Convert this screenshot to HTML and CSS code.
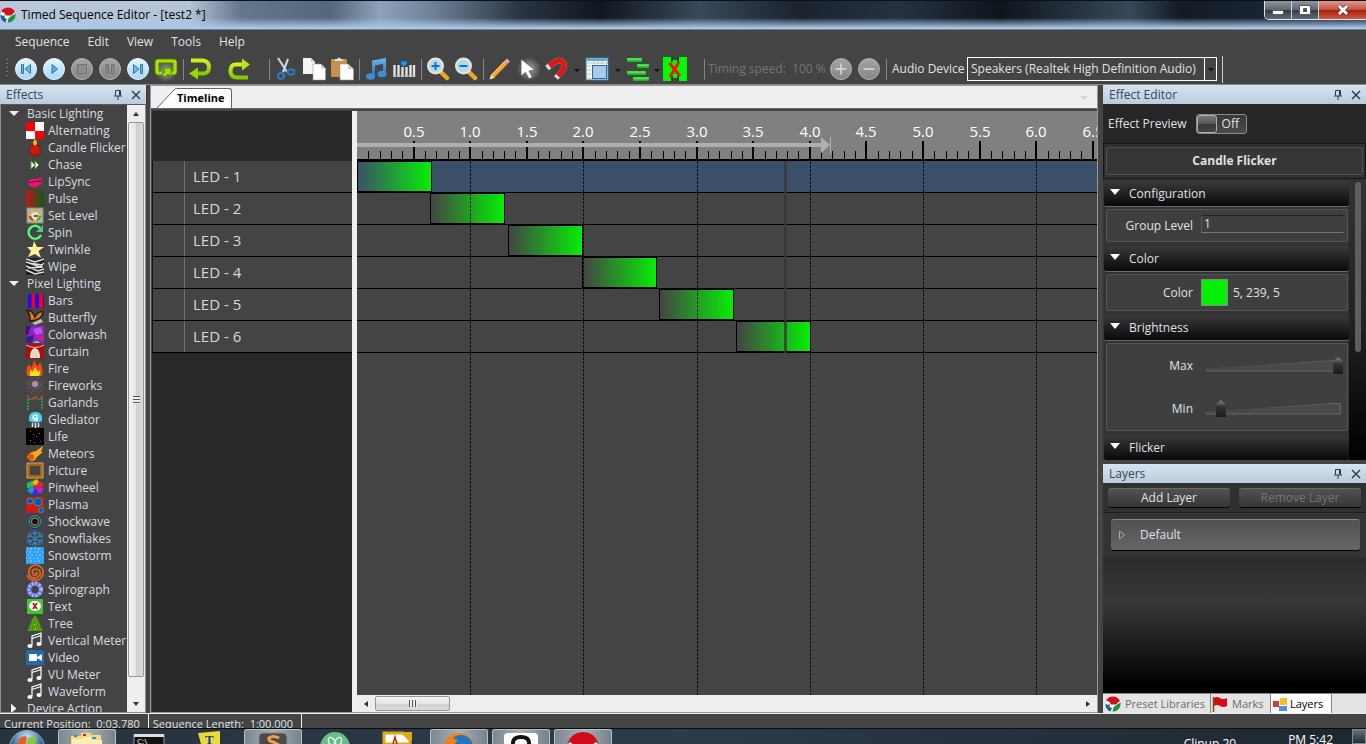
FILE: index.html
```html
<!DOCTYPE html>
<html lang="en">
<head>
  <title>Timed Sequence Editor - [test2 *]</title>
  <meta charset="utf-8">
  <meta name="viewport" content="width=device-width, initial-scale=1">
  <link rel="stylesheet" href="styles.css">
</head>
<body>

  <!-- shared shapes -->
  <svg class="defs" aria-hidden="true">
    <defs>
      <linearGradient id="blueDisc" x2="0" y2="1"><stop offset="0" stop-color="#e4f4ff"/><stop offset="1" stop-color="#a5d6fb"/></linearGradient>
      <linearGradient id="greyDisc" x2="0" y2="1"><stop offset="0" stop-color="#a6a6a6"/><stop offset="1" stop-color="#868686"/></linearGradient>
      <linearGradient id="lime" x2="0" y2="1"><stop offset="0" stop-color="#cdf01c"/><stop offset="1" stop-color="#84c800"/></linearGradient>
      <linearGradient id="note" x2="0" y2="1"><stop offset="0" stop-color="#6db4ea"/><stop offset="1" stop-color="#1f70b8"/></linearGradient>
      <radialGradient id="glow"><stop offset="0" stop-color="#aaa"/><stop offset="1" stop-color="#444"/></radialGradient>
      <linearGradient id="pulse"><stop offset="0" stop-color="#c01818"/><stop offset="1" stop-color="#0b5c18"/></linearGradient>
      <radialGradient id="orb" cy=".2"><stop offset="0" stop-color="#cfe6f5"/><stop offset="1" stop-color="#1c5d92"/></radialGradient>
      <symbol id="pin" viewBox="0 0 10 12"><path d="M2.500 1.500H7.500V6.500M2.500 1.500V6.500M6.500 1.500V6.500M1 7H9M5 7V11" fill="none" stroke="#2b3a48"/></symbol>
      <symbol id="close" viewBox="0 0 10 10"><path d="M1 1L9 9M9 1L1 9" fill="none" stroke="#2b3a48" stroke-width="1.400"/></symbol>
      <symbol id="notes" viewBox="0 0 18 17"><path d="M6 13V4L15 1V11M6 6.500L15 3.500" fill="none" stroke="#fff" stroke-width="1.200"/><ellipse cx="4" cy="14" rx="2.600" ry="2"/><ellipse cx="13" cy="12" rx="2.600" ry="2"/></symbol>
      <symbol id="logo" viewBox="0 0 16 16"><circle cx="8" cy="8" r="7.500" fill="#fff"/><path d="M1 4.500A8 8 0 0 1 15 5L11 8.500H6L4 5.500Z" fill="#d3101c"/><path d="M15.500 6.500A8 8 0 0 1 7.500 15.800L8.500 11L12 8.500Z" fill="#1d9440"/><path d="M.5 7.500L3 9L5 8L4.500 11L7 12L5.500 15.500A8 8 0 0 1 .5 7.500Z" fill="#1c5f9d"/></symbol>
    </defs>
  </svg>

  <header class="titlebar">
    <svg class="logo"><use href="#logo"/></svg>
    <h1>Timed Sequence Editor - [test2 *]</h1>
    <div class="winbtns">
      <button class="min" aria-label="Minimize"><svg width="14" height="12"><rect x="1.500" y="6.500" width="11" height="4" fill="#fff" stroke="#555a66"/></svg></button>
      <button class="max" aria-label="Maximize"><svg width="14" height="12"><path d="M1.500 1.500H12.500V10.500H1.500ZM5.500 4.500V7.500H8.500V4.500Z" fill="#fff" fill-rule="evenodd" stroke="#555a66"/></svg></button>
      <button class="quit" aria-label="Close"><svg width="14" height="12"><path d="M3 2L11 10M11 2L3 10" stroke="#54404a" stroke-width="4.500"/><path d="M3 2L11 10M11 2L3 10" stroke="#fff" stroke-width="2.800"/></svg></button>
    </div>
  </header>

  <nav class="menubar">
    <button>Sequence</button><button>Edit</button><button>View</button><button>Tools</button><button>Help</button>
  </nav>

  <div class="toolbar">
    <span class="grip"></span>
    <button aria-label="Go to start"><svg viewBox="0 0 24 24"><circle cx="12" cy="12" r="10.500" fill="url(#blueDisc)" stroke="#eaf6ff"/><path d="M7.500 7.500H9.500V16.500H7.500ZM16.500 7.500V16.500L11 12Z" fill="#6db7e4" stroke="#2e78ac"/></svg></button>
    <button aria-label="Play"><svg viewBox="0 0 24 24"><circle cx="12" cy="12" r="10.500" fill="url(#blueDisc)" stroke="#eaf6ff"/><path d="M10 7.500V16.500L15.500 12Z" fill="#5cabdc" stroke="#2e78ac"/></svg></button>
    <button aria-label="Stop" disabled><svg viewBox="0 0 24 24"><circle cx="12" cy="12" r="10.500" fill="url(#greyDisc)" stroke="#b0b0b0"/><path d="M7.500 7.500H16.500V16.500H7.500Z" fill="#8c8c8c" stroke="#707070"/></svg></button>
    <button aria-label="Pause" disabled><svg viewBox="0 0 24 24"><circle cx="12" cy="12" r="10.500" fill="url(#greyDisc)" stroke="#b0b0b0"/><path d="M8 7.500H10.500V16.500H8ZM13.500 7.500H16V16.500H13.500Z" fill="#8c8c8c" stroke="#707070"/></svg></button>
    <button aria-label="Go to end"><svg viewBox="0 0 24 24"><circle cx="12" cy="12" r="10.500" fill="url(#blueDisc)" stroke="#eaf6ff"/><path d="M14.500 7.500H16.500V16.500H14.500ZM7.500 7.500V16.500L13 12Z" fill="#6db7e4" stroke="#2e78ac"/></svg></button>
    <button aria-label="Loop"><svg viewBox="0 0 24 24"><circle cx="12" cy="14" r="11" fill="url(#glow)"/><path d="M8 16H4.500Q3 16 3 14.500V5.500Q3 4 4.500 4H19.500Q21 4 21 5.500V14.500Q21 16 19.500 16H17" fill="none" stroke="#568600" stroke-width="4.500"/><path d="M8 16H4.500Q3 16 3 14.500V5.500Q3 4 4.500 4H19.500Q21 4 21 5.500V14.500Q21 16 19.500 16H17" fill="none" stroke="#a6e000" stroke-width="3.200"/><path d="M9 11H17V20L14 17L11 20L8 18L11 15Z" fill="#a6e000" stroke="#568600"/></svg></button>
    <span class="sep"></span>
    <button class="wide" aria-label="Undo"><svg viewBox="0 0 24 24"><path d="M3 3.500H15Q21 4.500 21 10Q21 16.500 15 16.500H8" fill="none" stroke="url(#lime)" stroke-width="4"/><path d="M1 16.500L10 10.500V22.500Z" fill="#98d800"/></svg></button>
    <button class="wide" aria-label="Redo"><svg viewBox="0 0 24 24"><path d="M20 20.500H8Q2.500 19.500 2.500 14Q2.500 7.500 8 7.500H15" fill="none" stroke="url(#lime)" stroke-width="4"/><path d="M22 7.500L14 1.500V13.500Z" fill="#b4e610"/></svg></button>
    <span class="sep"></span>
    <button aria-label="Cut"><svg viewBox="0 0 24 24"><path d="M4 1L13 15M14 2L9 15" stroke="#c9d2d8" stroke-width="2.200"/><circle cx="7" cy="19" r="3" fill="none" stroke="#2d78bd" stroke-width="2.200"/><ellipse cx="17" cy="15" rx="3.500" ry="2.600" fill="none" stroke="#2d78bd" stroke-width="2.200"/></svg></button>
    <button aria-label="Copy"><svg viewBox="0 0 24 24"><path d="M1 1H9L13 5V17H1Z" fill="#f4f4f4"/><path d="M9 1V5H13" fill="#ccc"/><path d="M11 7H19L23.500 11.500V23H11Z" fill="#fff" stroke="#999" stroke-width=".6"/><path d="M19 7V11.500H23.500Z" fill="#ccc"/></svg></button>
    <button aria-label="Paste"><svg viewBox="0 0 24 24"><rect x="1" y="2" width="16" height="18" rx="1" fill="#c98f4c"/><path d="M5 4H13V2H11Q9 -1 7 2H5Z" fill="#dbe0e4"/><path d="M10 7H18L23.500 12V23H10Z" fill="#fff" stroke="#999" stroke-width=".6"/><path d="M18 7V12H23.500Z" fill="#ccc"/></svg></button>
    <span class="sep"></span>
    <button aria-label="Audio"><svg viewBox="0 0 24 24"><path d="M8 3.500L22 1V17H19V7L11 8.500V20H8Z" fill="url(#note)"/><ellipse cx="6.500" cy="19.500" rx="4.500" ry="3.200" fill="#3c8fd4"/><ellipse cx="18" cy="17" rx="4.500" ry="3.200" fill="#3c8fd4"/></svg></button>
    <button aria-label="Beat marks"><svg viewBox="0 0 24 24"><path d="M2.500 8V20M6.500 8V20M10.500 10V20M14.500 10V20M18.500 8V20M22 8V20" stroke="#e2e2e2" stroke-width="2.400"/><path d="M1 19H23" stroke="#bbb"/><path d="M9 4H15V7L12 10L9 7Z" fill="#2a90e0" stroke="#0b5fa4"/></svg></button>
    <span class="sep"></span>
    <button aria-label="Zoom in"><svg viewBox="0 0 24 24"><path d="M14 14L21 21" stroke="#f0a428" stroke-width="4.500" stroke-linecap="round"/><circle cx="9.500" cy="9" r="7.500" fill="#a9dcff" stroke="#f0e4c6" stroke-width="2"/><path d="M5.500 9H13.500M9.500 5V13" stroke="#1f6fb4" stroke-width="2"/></svg></button>
    <button aria-label="Zoom out"><svg viewBox="0 0 24 24"><path d="M14 14L21 21" stroke="#f0a428" stroke-width="4.500" stroke-linecap="round"/><circle cx="9.500" cy="9" r="7.500" fill="#a9dcff" stroke="#f0e4c6" stroke-width="2"/><path d="M5.500 9H13.500" stroke="#1f6fb4" stroke-width="2"/></svg></button>
    <span class="sep"></span>
    <button aria-label="Draw"><svg viewBox="0 0 24 24"><path d="M4 20L18 5.500" stroke="#f6a62c" stroke-width="4"/><path d="M3.500 18L17 4" stroke="#ffd489"/><path d="M18 5.500L20.500 3" stroke="#e9a0c0" stroke-width="4"/><path d="M1.500 22.500L3 17.500L6.500 21Z" fill="#f3dcb4"/></svg></button>
    <button aria-label="Select"><svg viewBox="0 0 24 24"><circle cx="13" cy="12" r="12" fill="url(#glow)"/><path d="M5 2V19L9.500 15.500L13 22L16.500 20L13 14L19 13Z" fill="#fff" stroke="#555" stroke-width=".8"/></svg></button>
    <button aria-label="Snap"><svg viewBox="0 0 24 24"><path d="M3 11L10 5.500Q15.500 1.500 19 5.500Q22 9.500 17.500 15L12 21" fill="none" stroke="#ddd" stroke-width="5.500"/><path d="M5.500 9L10 5.500Q15.500 1.500 19 5.500Q22 9.500 17.500 15L14 18.800" fill="none" stroke="#dc1616" stroke-width="5.500"/></svg></button>
    <span class="caret"></span>
    <button aria-label="Grid"><svg viewBox="0 0 24 24"><rect x="1" y="1" width="22" height="22" fill="#f2f7fb" stroke="#2d7ab4"/><path d="M1.500 1.500H22.500V4H1.500Z" fill="#58a8de"/><path d="M2 6H22M2 9H6M2 13H6M2 17H6M2 21H6M9 4V7M13 4V7M17 4V7" stroke="#d8c488"/><rect x="7.500" y="8.500" width="14" height="13" fill="#aac8e8" stroke="#2d68aa"/></svg></button>
    <span class="caret"></span>
    <button aria-label="Align"><svg viewBox="0 0 24 24"><path d="M1 1H16V5H1ZM11 7H23V11H11ZM1 14H20V18H1ZM7 20H23V24H7Z" fill="#2cc82c" stroke="#0c7c14" stroke-width=".6"/><path d="M1 2H16M11 8H23M1 15H20M7 21H23" stroke="#8cf08c"/></svg></button>
    <span class="caret close-up"></span>
    <button class="wide" aria-label="Close gaps"><svg viewBox="0 0 24 24"><path d="M0 0H24V24H0Z" fill="#00fb00"/><path d="M9 0V5M9 19V24M15 0V5M15 19V24" stroke="#111" stroke-width="1.500"/><path d="M10 0H14V3H10ZM10 21H14V24H10Z" fill="#444"/><path d="M6.500 6L17 19M16 5L7 20" stroke="#f01800" stroke-width="3"/></svg></button>
    <span class="sep"></span>
    <span class="speed">Timing speed:&nbsp; 100 %</span>
    <button aria-label="Faster" disabled><svg viewBox="0 0 24 24"><circle cx="12" cy="12" r="10.500" fill="url(#greyDisc)" stroke="#b0b0b0"/><path d="M6.500 12H17.500M12 6.500V17.500" stroke="#ccc" stroke-width="2"/></svg></button>
    <button aria-label="Slower" disabled><svg viewBox="0 0 24 24"><circle cx="12" cy="12" r="10.500" fill="url(#greyDisc)" stroke="#b0b0b0"/><path d="M6.500 12H17.500" stroke="#ccc" stroke-width="2"/></svg></button>
    <span class="sep"></span>
    <label for="audio">Audio Device</label>
    <div class="combo">
      <select id="audio"><option>Speakers (Realtek High Definition Audio)</option></select>
      <span class="combo-arrow"></span>
    </div>
    <span class="bar-end"></span>
  </div>

  <main>
    <aside class="effects">
      <div class="panel-head"><h2>Effects</h2><button aria-label="Pin"><svg class="pin"><use href="#pin"/></svg></button><button aria-label="Close"><svg class="close"><use href="#close"/></svg></button></div>
      <div class="tree-wrap">
        <ul class="tree">
          <li class="group open">Basic Lighting</li>
          <li><svg viewBox="0 0 18 17"><path d="M0 0H18V17H0Z" fill="#fff"/><path d="M0 0H9V9H0ZM9 9H18V17H9Z" fill="red"/></svg>Alternating</li>
          <li><svg viewBox="0 0 18 17"><path d="M4 7Q9 5 14 7V15Q9 18 4 15Z" fill="#d01808" stroke="#701008" stroke-width=".7"/><path d="M9 0Q13 4 9 7Q5 4 9 0Z" fill="#ffb020"/></svg>Candle Flicker</li>
          <li><svg viewBox="0 0 18 17"><path d="M5 5L9 9L5 13ZM9 5L13 9L9 13Z" fill="#fff" stroke="#4ba62a"/></svg>Chase</li>
          <li><svg viewBox="0 0 18 17"><path d="M1 10Q6 4 10 6Q15 4 17 7Q15 13 9 14Q4 14 1 10Z" fill="#f0146c"/><path d="M2 10Q9 8 16 8" stroke="#60082c" fill="none"/></svg>LipSync</li>
          <li><svg viewBox="0 0 18 17"><path d="M0 0H18V17H0Z" fill="url(#pulse)"/></svg>Pulse</li>
          <li><svg viewBox="0 0 18 17"><rect x="1" y="1" width="16" height="15" fill="#b4b4ac" stroke="#888"/><circle cx="9" cy="9" r="5" fill="#ddd" stroke="#d8b820" stroke-width="2"/><path d="M4 9A5 5 0 0 0 7 13" stroke="#d02020" stroke-width="2" fill="none"/><path d="M14 9A5 5 0 0 1 11 13" stroke="#40a030" stroke-width="2" fill="none"/><path d="M8 9H12" stroke="#333" stroke-width="1.500"/></svg>Set Level</li>
          <li><svg viewBox="0 0 18 17"><path d="M15 11A6.500 6.500 0 1 1 14 4" fill="none" stroke="#17863a" stroke-width="3.500"/><path d="M15 11A6.500 6.500 0 1 1 14 4" fill="none" stroke="#7cec9a" stroke-width="2"/><path d="M17 1V8H10Z" fill="#50d070"/></svg>Spin</li>
          <li><svg viewBox="0 0 18 17"><path d="M8 0L11 6L18 6L12.500 10L15 17L9 13L2 16L5 10L1 6L6.500 6Z" fill="#fff3a0"/></svg>Twinkle</li>
          <li><svg viewBox="0 0 18 17"><path d="M0 0H18V17H0Z" fill="#222"/><path d="M0 1L9 4L18 1M0 4L14 9L18 5M0 8L12 13L18 11M0 12L9 16L18 14M3 5L16 7M2 10L17 9" fill="none" stroke="#ddd" stroke-width="1.500"/></svg>Wipe</li>
          <li class="group open">Pixel Lighting</li>
          <li><svg viewBox="0 0 18 17"><path d="M2 2H18V16H2Z" fill="#1010ff"/><path d="M5.500 2H9V16H5.500ZM13 2H17V16H13Z" fill="red"/></svg>Bars</li>
          <li><svg viewBox="0 0 18 17"><path d="M1 1Q7 2 9 8Q12 2 17 3Q16 9 10 11L4 12Q5 7 1 1Z" fill="#d87828" stroke="#2b1a10" stroke-width="1.500"/><path d="M6 14L15 10L17 13L9 16Z" fill="#bbb"/></svg>Butterfly</li>
          <li><svg viewBox="0 0 18 17"><path d="M0 0H18V17H0Z" fill="#8c24c8"/><path d="M0 0H5L2 9H0Z" fill="#401078"/><path d="M7 3L15 1L17 7L10 9Z" fill="#c050e8"/><path d="M0 11L8 9L6 17H0Z" fill="#3c1c90"/><path d="M10 10L18 9V14L12 14Z" fill="#c82090"/><path d="M7 17Q11 13 14 17Z" fill="#70e070"/></svg>Colorwash</li>
          <li><svg viewBox="0 0 18 17"><path d="M0 1H18V16H0Z" fill="#a81010"/><path d="M4 15Q4 6 9 5Q14 6 14 15Z" fill="#f2e6d4"/><path d="M7 15V8M9 15V6M11 15V8" stroke="#c9b79c" stroke-width=".6"/><path d="M0 2Q9 7 18 2" stroke="#eebcb0" fill="none"/></svg>Curtain</li>
          <li><svg viewBox="0 0 18 17"><path d="M1 16Q-1 8 3 4Q4 8 6 7Q6 3 9 0Q9 5 12 6L14 2Q18 10 16 16Z" fill="#f04a10"/><path d="M4 16Q3 11 5 10L7 12L9 7L12 12L14 10Q15 13 13 16Z" fill="#ffe020"/></svg>Fire</li>
          <li><svg viewBox="0 0 18 17"><path d="M9 0V17M0 8H18M2 2L16 15M16 2L2 15M5 0L13 17M13 0L5 17M0 5L18 12M0 12L18 5" stroke="#7d6a78" stroke-width="1" stroke-dasharray="1 1"/><circle cx="9" cy="7" r="3" fill="#b48ca4"/></svg>Fireworks</li>
          <li><svg viewBox="0 0 18 17"><path d="M2 16V3Q5 7 9 3Q13 7 16 3V16" fill="none" stroke="#2f9848" stroke-width="2" stroke-dasharray="2 1"/><path d="M1 1H3V4H1ZM8 2H11V5H8ZM15 1H17V4H15Z" fill="#e02828"/></svg>Garlands</li>
          <li><svg viewBox="0 0 18 17"><path d="M3 10V6Q4 1 9.500 1Q15 1 16 6V10Q10 13 3 10Z" fill="#50cdec"/><path d="M12 5Q8 3 7 6Q7 9 11 9V7H9" fill="none" stroke="#fff" stroke-width="1.500"/><path d="M6.500 12V16M9.500 12V17M12.500 12V16" stroke="#ddd" stroke-width="1.500"/></svg>Glediator</li>
          <li><svg viewBox="0 0 18 17"><path d="M0 0H18V17H0Z" fill="#000"/><path d="M4 3H5V4H4ZM10 8H11V9H10Z" fill="#e02020"/><path d="M13 5H14V6H13ZM4 12H5V13H4Z" fill="#20c020"/><path d="M7 6H8V7H7ZM14 13H15V14H14ZM8 14H9V15H8Z" fill="#5050ff"/></svg>Life</li>
          <li><svg viewBox="0 0 18 17"><path d="M1 12Q3 7 10 6L17 1L15 7L17 7Q10 12 9 15Q4 18 1 12Z" fill="#ffa818"/><circle cx="5" cy="12" r="3.200" fill="#e05808"/></svg>Meteors</li>
          <li><svg viewBox="0 0 18 17"><path d="M2.500 2.500H15.500V14.500H2.500Z" fill="none" stroke="#a06818" stroke-width="3"/><path d="M1 1H17V16H1Z" fill="none" stroke="#d8a458"/></svg>Picture</li>
          <li><svg viewBox="0 0 18 17"><path d="M9 8L5 3L11 0L13 3Z" fill="#f0b010"/><path d="M9 8L14 2L18 6L15 9Z" fill="#f01848"/><path d="M9 8L17 9L16 14L12 14Z" fill="#c020d0"/><path d="M9 8L13 15L8 17L5 14Z" fill="#3030e0"/><path d="M9 8L6 15L1 12L3 9Z" fill="#1898e0"/><path d="M9 8L1 9L1 4L6 2Z" fill="#20c060"/><circle cx="9" cy="8" r="2" fill="#e02020"/></svg>Pinwheel</li>
          <li><svg viewBox="0 0 18 17"><path d="M0 1H18V17H0Z" fill="#d01818"/><circle cx="4" cy="5" r="3" fill="#2040e0" stroke="#20b040"/><circle cx="12" cy="6" r="4" fill="#2040e0" stroke="#20b040"/><circle cx="15" cy="14" r="2.500" fill="#2040e0" stroke="#20b040"/></svg>Plasma</li>
          <li><svg viewBox="0 0 18 17"><circle cx="9" cy="8.500" r="8" fill="#202050" stroke="#4040c0"/><circle cx="9" cy="8.500" r="6" fill="none" stroke="#30a030" stroke-width="1.500"/><circle cx="9" cy="8.500" r="3.600" fill="#111" stroke="#a07070" stroke-width="1.500"/></svg>Shockwave</li>
          <li><svg viewBox="0 0 18 17"><path d="M9 0V17M1 4L17 13M17 4L1 13M6 2L9 5L12 2M6 15L9 12L12 15M1 7L5 6.500L4 2M17 10L13 10.500L14 15M17 7L13 6.500L14 2M1 10L5 10.500L4 15" fill="none" stroke="#3880bc" stroke-width="1.300"/></svg>Snowflakes</li>
          <li><svg viewBox="0 0 18 17"><path d="M0 0H18V17H0Z" fill="#2ea0f8"/><path d="M1 2H17M0 5H18M2 8H16M0 11H18M1 14H17" stroke="#a0dcff" stroke-dasharray="1 2 2 3"/></svg>Snowstorm</li>
          <li><svg viewBox="0 0 18 17"><path d="M9 9Q11 8 11 10Q9 13 7 10Q5 5 10 5Q15 6 14 11Q10 16 5 13Q0 7 6 2Q13 -1 17 6Q18 13 12 16Q4 18 1 11" fill="none" stroke="#e8641c" stroke-width="1.700"/></svg>Spiral</li>
          <li><svg viewBox="0 0 18 17"><circle cx="9" cy="8.500" r="6" fill="none" stroke="#4888f0" stroke-width="4.500"/><circle cx="9" cy="8.500" r="6" fill="none" stroke="#f0a0e0" stroke-width="3.500" stroke-dasharray="1.500 2"/></svg>Spirograph</li>
          <li><svg viewBox="0 0 18 17"><rect x="1" y="1" width="16" height="15" fill="#40c830"/><ellipse cx="9" cy="8" rx="6" ry="5" fill="#fff"/><path d="M7 5L11 11M11 5L7 11" stroke="#c01818" stroke-width="1.800"/></svg>Text</li>
          <li><svg viewBox="0 0 18 17"><path d="M9 0L13 6L12 6L15 11L14 11L17 16H1L4 11L3 11L6 6L5 6Z" fill="#4ca010"/><path d="M8 5H9V6H8ZM11 9H12V10H11ZM6 12H7V13H6Z" fill="#f02020"/><path d="M9 13H10V14H9ZM8 9H9V10H8Z" fill="#ffe040"/></svg>Tree</li>
          <li><svg fill="#fff"><use href="#notes"/></svg>Vertical Meter</li>
          <li><svg viewBox="0 0 18 17"><rect x="0" y="1" width="18" height="15" rx="1" fill="#2468b0"/><path d="M3 5H11V12H3ZM11 8L16 5V12L11 9Z" fill="#fff"/></svg>Video</li>
          <li><svg fill="#fff"><use href="#notes"/></svg>VU Meter</li>
          <li><svg fill="#fff"><use href="#notes"/></svg>Waveform</li>
          <li class="group">Device Action</li>
        </ul>
        <div class="vscroll"><span class="up"></span><span class="thumb"></span><span class="down"></span></div>
      </div>
    </aside>

    <section class="document">
      <div class="tabstrip">
        <svg class="slant" viewBox="0 0 20 20"><path d="M0 20L16 3Q18 .5 20 .5V20Z" fill="#fff"/><path d="M0 20L16 3Q18 .5 20 .5" fill="none" stroke="#666"/></svg>
        <a href="#timeline">Timeline</a>
        <span class="tab-menu"></span>
      </div>
      <div class="timeline" id="timeline">
        <div class="rows">
          <div class="corner"></div>
          <div class="row-label">LED - 1</div>
          <div class="row-label">LED - 2</div>
          <div class="row-label">LED - 3</div>
          <div class="row-label">LED - 4</div>
          <div class="row-label">LED - 5</div>
          <div class="row-label">LED - 6</div>
        </div>
        <div class="splitter"></div>
        <div class="time">
          <svg class="ruler" id="ruler"></svg>
          <div class="grid" id="grid"></div>
          <div class="hscroll"><span class="left"></span><span class="thumb"></span><span class="right"></span></div>
        </div>
      </div>
    </section>

    <aside class="side">
      <section class="editor">
        <div class="panel-head"><h2>Effect Editor</h2><button aria-label="Pin"><svg class="pin"><use href="#pin"/></svg></button><button aria-label="Close"><svg class="close"><use href="#close"/></svg></button></div>
        <div class="preview"><span>Effect Preview</span><button class="toggle"><i></i>Off</button></div>
        <div class="effect-name"><h3>Candle Flicker</h3></div>
        <div class="props">
          <div class="cats">
            <button class="cat">Configuration</button>
            <div class="fields"><div class="field level"><label for="group">Group Level</label><input id="group" type="text" value="1"></div></div>
            <button class="cat">Color</button>
            <div class="fields"><div class="field color"><span class="name">Color</span><button class="swatch" aria-label="Pick color"></button>5, 239, 5</div></div>
            <button class="cat">Brightness</button>
            <div class="fields">
              <div class="field"><label for="max">Max</label><span class="wedge"><input id="max" type="range" value="98"></span></div>
              <div class="field"><label for="min">Min</label><span class="wedge"><input id="min" type="range" value="11"></span></div>
            </div>
            <button class="cat">Flicker</button>
          </div>
          <div class="thin-scroll"></div>
        </div>
      </section>
      <section class="layers">
        <div class="panel-head"><h2>Layers</h2><button aria-label="Pin"><svg class="pin"><use href="#pin"/></svg></button><button aria-label="Close"><svg class="close"><use href="#close"/></svg></button></div>
        <div class="layer-btns"><button>Add Layer</button><button disabled>Remove Layer</button></div>
        <div class="layer-list">
          <div class="layer"><svg width="8" height="10"><path d="M1.500 1L6.500 5L1.500 9Z" fill="none" stroke="#aaa"/></svg>Default</div>
        </div>
        <div class="dock-tabs">
          <button><svg><use href="#logo"/></svg>Preset Libraries</button>
          <button class="marks"><svg viewBox="0 0 16 16"><path d="M1.500 1V16" stroke="#7a4a20" stroke-width="1.500"/><path d="M2 2Q5 0 8 2T15 2V10Q11 12 8 10T2 10Z" fill="#d40c14"/></svg>Marks</button>
          <button class="active"><svg viewBox="0 0 16 16"><rect x="1" y="5" width="6" height="6" fill="#d83c34"/><rect x="8" y="2" width="7" height="7" fill="#f6c01c"/><rect x="7" y="10" width="8" height="5" fill="#4c8cf0"/></svg>Layers</button>
        </div>
      </section>
    </aside>
  </main>

  <footer class="status">
    <span>Current Position:&nbsp; 0:03.780</span><span>Sequence Length:&nbsp; 1:00.000</span>
  </footer>

  <div class="taskbar">
    <button class="start" aria-label="Start"><svg viewBox="0 0 36 15"><circle cx="18" cy="19" r="17.500" fill="url(#orb)" stroke="#9ab"/><path d="M10 10Q14 6 18 8L16 16H9Z" fill="#e85a20"/><path d="M19 8Q23 10 28 7L26 16H18Z" fill="#8cc63c"/></svg></button>
    <button class="lit" aria-label="Explorer"><svg viewBox="0 0 36 15"><path d="M2 15V6H12V3H22V5H32V15Z" fill="#f7d983"/><path d="M3 9H14V7H24V10H33V15H3Z" fill="#fdeeb8"/><path d="M5 5H8V7H5Z" fill="#20a040"/><path d="M14 4H17V6H14Z" fill="#d02020"/><path d="M23 7H27V9H23Z" fill="#3090e0"/></svg></button>
    <button aria-label="Command Prompt"><svg viewBox="0 0 36 15"><rect x="3" y="6" width="30" height="12" fill="#111" stroke="#999"/><rect x="3" y="5" width="30" height="3" fill="#ddd"/><text x="6" y="15" fill="#fff" font-size="8">C:\</text></svg></button>
    <button aria-label="Text tool"><svg viewBox="0 0 36 15"><path d="M5 4L27 2V15H8Z" fill="#e8dc3c"/><text x="12" y="15" fill="#1c3a8c" font-size="13" font-weight="bold" font-family="Liberation Serif">T</text></svg></button>
    <button class="lit" aria-label="Sublime Text"><svg viewBox="0 0 36 15"><rect x="4" y="3" width="28" height="20" rx="4" fill="#4b4b4b" stroke="#888"/><path d="M24 8Q18 5 14 8Q13 11 18 12L24 15" fill="none" stroke="#f0a050" stroke-width="3"/></svg></button>
    <button aria-label="Atom"><svg viewBox="0 0 36 15"><circle cx="18" cy="18" r="15" fill="#66bf8a"/><ellipse cx="15" cy="13" rx="3" ry="5" fill="none" stroke="#e4ffee" stroke-width="1.500" transform="rotate(-30 15 13)"/><ellipse cx="21" cy="13" rx="3" ry="5" fill="none" stroke="#e4ffee" stroke-width="1.500" transform="rotate(30 21 13)"/></svg></button>
    <button aria-label="Draw"><svg viewBox="0 0 36 15"><path d="M5 15V4H24L31 11V15Z" fill="#fff" stroke="#e0a814" stroke-width="3"/><path d="M14 15L16 8L18 15" fill="none" stroke="#a03020" stroke-width="1.500"/><path d="M23 3L33 12V3Z" fill="#e0a814"/></svg></button>
    <button class="lit" aria-label="Firefox"><svg viewBox="0 0 36 15"><circle cx="18" cy="18" r="15" fill="#f08018"/><circle cx="20" cy="17" r="12" fill="#2474c4"/><path d="M4 15Q5 7 11 5Q11 9 17 10L13 15Z" fill="#f08018"/></svg></button>
    <button class="lit" aria-label="GitHub"><svg viewBox="0 0 36 15"><rect x="1" y="3" width="34" height="20" rx="4" fill="#fff"/><path d="M10 15Q9 7 18 7Q27 7 26 15" fill="none" stroke="#111" stroke-width="4"/></svg></button>
    <button class="lit" aria-label="Vixen"><svg viewBox="0 0 36 15"><path d="M2 15Q6 2 18 2Q30 2 34 15Z" fill="#d00c1c"/><path d="M2 15L5 12L9 15ZM27 15L31 12L34 15Z" fill="#fff"/></svg></button>
    <span class="tray">Clipup 20</span>
    <span class="clock">PM 5:42</span>
    <span class="desk"></span>
  </div>

  <script>
    const SCALE = 113.2 // pixels per second
    const END = 4.18
    const CURSOR = 3.78
    const effects = [
      { start: 0, len: .66 },
      { start: .645, len: .66 },
      { start: 1.33, len: .66 },
      { start: 1.99, len: .66 },
      { start: 2.67, len: .66 },
      { start: 3.35, len: .66 },
    ]
    const x = t => Math.round(t * SCALE)

    const drawRuler = () => {
      const last = Math.ceil(ruler.clientWidth / SCALE * 10)
      let major = '', minor = '', text = ''
      for (let i = 1; i <= last; i++) {
        const px = x(i / 10)
        if (i % 5) minor += `M${px + .5} 40V48`
        else {
          major += `M${px} 30V48`
          text += `<text x="${px}" y="26">${(i / 10).toFixed(1)}</text>`
        }
      }
      const e = x(END)
      ruler.innerHTML = `
        <path class="minor" d="${minor}"/>
        <path class="major" d="${major}"/>
        <path class="range" d="M0 32H${e - 9}V26L${e} 34L${e - 9} 42V36H0ZM${e} 26H${e + 1}V43H${e}Z"/>
        <path class="major" d="M0 49H${ruler.clientWidth}"/>
        ${text}`
    }

    const drawGrid = () => {
      grid.innerHTML = effects.map((e, i) => `
        <div class="row${i ? '' : ' selected'}"><div class="effect" style="left: ${x(e.start)}px; width: ${x(e.len)}px"></div></div>`).join('')
      for (let t = 1; t * SCALE < grid.clientWidth; t++)
        grid.innerHTML += `<div class="second" style="left: ${x(t)}px"></div>`
      grid.innerHTML += `<div class="cursor" style="left: ${x(CURSOR) - 1}px"></div>`
    }

    const draw = () => { drawRuler(); drawGrid() }
    window.addEventListener('resize', draw)
    draw()
  </script>

</body>
</html>
```
FILE: styles.css
```css
*, *::before, *::after {
  box-sizing: border-box;
}
html, body {
  height: 100%;
  margin: 0;
}
body {
  display: flex;
  flex-direction: column;
  overflow: hidden;
  background: #444;
  color: #dfe3e6;
  font: 12px/16px "Open Sans", "Noto Sans", sans-serif;
}
button, input, select {
  font: inherit;
  color: inherit;
  border: 0;
  padding: 0;
  margin: 0;
  background: none;
}
h1, h2, h3, ul {
  margin: 0;
  padding: 0;
  font: inherit;
}
svg {
  display: block;
  flex-shrink: 0;
}
.defs {
  position: absolute;
  width: 0;
  height: 0;
}

/* title bar */
.titlebar {
  height: 30px;
  flex-shrink: 0;
  display: flex;
  align-items: center;
  gap: 5px;
  border-top: 1px solid #0c1018;
  border-bottom: 1px solid #6f8294;
  color: #000;
  background:
    linear-gradient(#0000 60%, #a9c8ea 97%),
    linear-gradient(90deg, #b9c8dc 0, #b4c3d6 190px, #66788f 240px, #54667c 330px, #8da2bb 380px, #6f8399 430px, #2a3442 520px, #10161f 600px, #39485a 700px, #1a232e 800px, #263240 900px, #0d141c 1000px, #38485a 1130px, #131b25 1180px, #223040);
}
.logo {
  width: 16px;
  height: 16px;
}
.winbtns {
  margin-left: auto;
  align-self: flex-start;
  display: flex;
  border: 1px solid #dde6ee;
  border-top: 0;
  border-right: 0;
  border-radius: 0 0 0 5px;
  overflow: hidden;
}
.winbtns button {
  width: 27px;
  height: 18px;
  display: flex;
  align-items: center;
  justify-content: center;
  border-right: 1px solid #cdd6de;
  background: linear-gradient(#8e969e, #5c646c 50%, #353d46 51%, #5f6b78);
}
.winbtns .quit {
  width: 47px;
  border: 0;
  background: linear-gradient(#dc9c90, #c4503c 50%, #a82010 51%, #cc5840);
}

/* menu and tools */
.menubar {
  height: 24px;
  flex-shrink: 0;
  display: flex;
  padding-left: 6px;
}
.menubar button {
  padding: 0 9px;
}
.toolbar {
  height: 31px;
  flex-shrink: 0;
  display: flex;
  align-items: center;
  border-bottom: 1px solid #8a8a8a;
}
.grip {
  width: 12px;
  height: 20px;
  border-right: 4px solid #444;
  background: repeating-linear-gradient(#777 0 1px, #444 1px 4px) right / 2px 100% no-repeat;
}
.toolbar button {
  width: 28px;
  display: flex;
  justify-content: center;
  flex-shrink: 0;
}
.toolbar button svg {
  width: 24px;
  height: 24px;
}
.toolbar .wide {
  margin-right: 12px;
}
.sep {
  width: 6px;
  height: 21px;
  flex-shrink: 0;
  background: linear-gradient(#858585, #858585) center / 1px 100% no-repeat;
}
.caret {
  width: 13px;
  flex-shrink: 0;
}
.caret::before, .combo-arrow::before {
  content: "";
  display: block;
  width: 6px;
  margin: 2px auto 0;
  border: 3px solid transparent;
  border-top-color: #111;
  border-bottom: 0;
}
.close-up {
  width: 9px;
}
.speed {
  width: 120px;
  padding-left: 1px;
  white-space: nowrap;
  color: #747474;
}
.toolbar label {
  width: 78px;
  padding-left: 3px;
  white-space: nowrap;
}
.combo {
  width: 250px;
  height: 24px;
  display: flex;
  border: 1px solid #fff;
}
.combo select {
  flex: 1;
  min-width: 0;
  padding-left: 3px;
  appearance: none;
}
.combo-arrow {
  width: 12px;
  border-left: 1px solid #fff;
  padding-top: 8px;
}
.bar-end {
  width: 6px;
  height: 27px;
  border-right: 1px solid #ccc;
}

main {
  flex: 1;
  min-height: 0;
  display: flex;
  gap: 4px;
}

/* docked panels */
.panel-head {
  height: 19px;
  flex-shrink: 0;
  display: flex;
  align-items: center;
  gap: 8px;
  padding: 1px 5px 0 6px;
  color: #33475c;
  background: linear-gradient(#d6e3f1, #bccbdb);
}
.panel-head h2 {
  flex: 1;
}
.pin {
  width: 10px;
  height: 12px;
}
.close {
  width: 10px;
  height: 10px;
}

/* effects tree */
.effects {
  width: 146px;
  display: flex;
  flex-direction: column;
}
.tree-wrap {
  flex: 1;
  min-height: 0;
  display: flex;
  border: 1px solid #8a8e92;
  border-top-color: #55595d;
}
.tree {
  flex: 1;
  overflow: hidden;
  list-style: none;
  color: #d4dde2;
}
.tree li {
  height: 17px;
  display: flex;
  align-items: center;
  gap: 4px;
  padding-left: 25px;
  line-height: 17px;
  white-space: nowrap;
}
.tree li svg {
  width: 18px;
  height: 17px;
}
.tree .group {
  gap: 8px;
  padding-left: 8px;
}
.group::before {
  content: "";
  width: 10px;
  height: 10px;
  background: #eee;
  clip-path: polygon(20% 0, 75% 50%, 20% 100%);
}
.group.open::before {
  clip-path: polygon(0 25%, 100% 25%, 50% 75%);
}
.vscroll {
  width: 18px;
  display: flex;
  flex-direction: column;
  background: #eee;
}
.vscroll span {
  display: flex;
  align-items: center;
  justify-content: center;
}
.vscroll .up, .vscroll .down {
  height: 17px;
}
.vscroll .up::before, .vscroll .down::before {
  content: "";
  border: 3px solid transparent;
  border-bottom: 4px solid #333;
  border-top: 0;
}
.vscroll .down::before {
  border-bottom: 0;
  border-top: 4px solid #333;
}
.vscroll .thumb {
  flex: 1;
  margin: 0 1px 18px;
  border: 1px solid #959595;
  border-radius: 2px;
  background: linear-gradient(90deg, #f4f4f4, #e4e4e4 50%, #cfcfd2 51%, #dcdcdf);
}
.vscroll .thumb::before {
  content: "";
  width: 7px;
  height: 8px;
  background: repeating-linear-gradient(#555 0 1px, #eee 1px 3px);
}

/* timeline document */
.document {
  flex: 1;
  min-width: 0;
  display: flex;
  flex-direction: column;
  border: 1px solid #999;
}
.tabstrip {
  height: 23px;
  flex-shrink: 0;
  display: flex;
  align-items: flex-end;
  padding-left: 6px;
  border-bottom: 1px solid #666;
  background: #efefef;
}
.slant {
  width: 20px;
  height: 20px;
}
.tabstrip a {
  height: 20px;
  padding-right: 7px;
  color: #000;
  font-size: 11px;
  font-weight: bold;
  line-height: 18px;
  text-decoration: none;
  background: #fff;
  border: 1px solid #666;
  border-width: 1px 1px 0 0;
  border-radius: 0 3px 0 0;
}
.tab-menu {
  margin: 0 9px 8px auto;
  border: 4px solid transparent;
  border-top-color: #d4d4d4;
  border-bottom: 0;
}
.timeline {
  flex: 1;
  min-height: 0;
  display: flex;
  padding: 2px 0 0 1px;
}
.rows {
  width: 200px;
  background: #282828;
}
.corner {
  height: 50px;
  background: #282828;
}
.row-label {
  height: 32px;
  padding-left: 40px;
  font-size: 15px;
  line-height: 31px;
  color: #d9d9d9;
  border-bottom: 1px solid #000;
  background: linear-gradient(#707070, #707070) 31px / 1px 100% no-repeat #444;
  border-left: 1px solid #111;
}
.splitter {
  width: 5px;
  background: #f0f0f0;
}
.time {
  flex: 1;
  min-width: 0;
  display: flex;
  flex-direction: column;
}
.ruler {
  width: 100%;
  height: 50px;
  background: #808080;
  font-size: 15px;
  text-anchor: middle;
  fill: #fff;
}
.ruler .minor {
  stroke: #000;
}
.ruler .major {
  stroke: #000;
  stroke-width: 2;
}
.ruler .range {
  fill: #afafaf;
}
.grid {
  flex: 1;
  position: relative;
  overflow: hidden;
}
.row {
  height: 32px;
  position: relative;
  border-bottom: 1px solid #000;
}
.selected {
  background: #3b5068;
}
.effect {
  position: absolute;
  height: 31px;
  border: 1px solid #000;
  background: linear-gradient(90deg, #05ef0500, #05ef05);
}
.second {
  position: absolute;
  top: 0;
  bottom: 0;
  width: 1px;
  background: repeating-linear-gradient(#000000c0 0 3px, #0000 3px 4px);
}
.cursor {
  position: absolute;
  top: 0;
  width: 3px;
  height: 192px;
  background: #383838cc;
}
.hscroll {
  height: 17px;
  display: flex;
  align-items: center;
  padding: 0 7px;
  background: #eee;
}
.hscroll .left, .hscroll .right {
  border: 3px solid transparent;
  border-right: 4px solid #333;
  border-left: 0;
}
.hscroll .right {
  margin-left: auto;
  border-right: 0;
  border-left: 4px solid #333;
}
.hscroll .thumb {
  width: 75px;
  height: 15px;
  margin-left: 7px;
  display: flex;
  align-items: center;
  justify-content: center;
  border: 1px solid #959595;
  border-radius: 2px;
  background: linear-gradient(#f4f4f4, #e4e4e4 50%, #cfcfd2 51%, #dcdcdf);
}
.hscroll .thumb::before {
  content: "";
  width: 8px;
  height: 7px;
  background: repeating-linear-gradient(90deg, #555 0 1px, #eee 1px 3px);
}

/* effect editor */
.side {
  width: 264px;
  display: flex;
  flex-direction: column;
  gap: 4px;
  padding-left: 1px;
}
.editor {
  height: 375px;
  display: flex;
  flex-direction: column;
  background: #262626;
}
.preview {
  height: 39px;
  display: flex;
  align-items: center;
  gap: 9px;
  padding-left: 5px;
}
.toggle {
  width: 51px;
  height: 20px;
  display: flex;
  gap: 5px;
  line-height: 18px;
  border: 1px solid #8c8c8c;
  border-radius: 3px;
  background: linear-gradient(#383838, #4a4a4a);
}
.toggle i {
  width: 20px;
  height: 18px;
  border: 1px solid #a8b0c4;
  border-radius: 3px;
  background: linear-gradient(#777, #555 50%, #3a3a3a 51%, #444);
}
.effect-name {
  height: 36px;
  padding: 3px 2px;
  border: 1px solid #161616;
  background: #303030;
}
.effect-name h3 {
  height: 28px;
  border: 1px solid #505050;
  border-radius: 2px;
  background: #363636;
  font-weight: bold;
  line-height: 26px;
  text-align: center;
}
.props {
  flex: 1;
  min-height: 0;
  overflow: hidden;
  display: flex;
  gap: 6px;
  padding-top: 2px;
  background: linear-gradient(#333, #222 50%, #000);
}
.cats {
  width: 246px;
  padding: 0 0 0 1px;
  display: flex;
  flex-direction: column;
  background: #333;
}
.cat {
  height: 26px;
  flex-shrink: 0;
  display: flex;
  align-items: center;
  gap: 9px;
  padding-left: 6px;
  border-bottom: 1px solid #6c6c6c;
  border-radius: 3px;
  background: linear-gradient(#3a3a3a, #090909);
}
.cat::before {
  content: "";
  margin-bottom: 3px;
  border: 5px solid transparent;
  border-top: 6px solid #fff;
  border-bottom: 0;
}
.fields {
  margin: 2px 1px 4px 2px;
  border: 1px solid #555;
  border-radius: 2px;
  background: #3f3f3f;
}
.field {
  height: 43px;
  display: flex;
  align-items: center;
}
.level {
  height: 31px;
}
.color {
  height: 35px;
}
.field label, .name {
  width: 86px;
  margin-right: 8px;
  text-align: right;
}
.field input[type=text] {
  width: 143px;
  height: 18px;
  margin-bottom: 4px;
  padding-left: 2px;
  border: 1px solid #222;
  border-color: #222 #3f3f3f #777 #555;
}
.swatch {
  width: 27px;
  height: 27px;
  margin-right: 5px;
  border: 1px solid #888;
  background: #05ef05;
}
.wedge {
  position: relative;
  width: 145px;
  height: 18px;
}
.wedge::before, .wedge::after {
  content: "";
  position: absolute;
  left: 5px;
  right: 5px;
  bottom: 3px;
  height: 12px;
  background: #666;
  clip-path: polygon(0 80%, 100% 0, 100% 100%, 0 100%);
}
.wedge::after {
  left: 6px;
  right: 6px;
  bottom: 4px;
  height: 10px;
  background: #4a4a4a;
}
.wedge input {
  position: absolute;
  z-index: 1;
  width: 100%;
  height: 18px;
  appearance: none;
}
.wedge input::-webkit-slider-thumb {
  appearance: none;
  width: 10px;
  height: 17px;
  background: linear-gradient(#888, #333 40%, #1c1c1c);
  clip-path: polygon(50% 0, 100% 25%, 100% 100%, 0 100%, 0 25%);
}
.thin-scroll {
  width: 6px;
  height: 170px;
  margin-top: 1px;
  border-radius: 3px;
  background: #5e5e5e;
}

/* layers */
.layers {
  flex: 1;
  min-height: 0;
  display: flex;
  flex-direction: column;
  background: #303030;
}
.layer-btns {
  display: flex;
  gap: 9px;
  padding: 5px 5px 4px;
}
.layer-btns button {
  flex: 1;
  height: 20px;
  border-top: 1px solid #6a6a6a;
  border-bottom: 1px solid #000;
  border-radius: 3px;
  background: linear-gradient(#525252, #363636);
}
.layer-btns button:disabled {
  color: #747474;
}
.layer-list {
  flex: 1;
  padding: 6px 6px 0 8px;
  border-top: 1px solid #1c1c1c;
  background: linear-gradient(#333 24%, #2b2b2b 25%, #383838 50%, #000 96%);
}
.layer {
  height: 32px;
  display: flex;
  align-items: center;
  gap: 14px;
  padding-left: 7px;
  border-top: 1px solid #888;
  border-bottom: 1px solid #000;
  border-radius: 3px;
  background: linear-gradient(#525252, #666);
}
.dock-tabs {
  height: 20px;
  display: flex;
  border-top: 1px solid #888;
  color: #6c6c6c;
  font-size: 11px;
  background: #e4e4e4;
}
.dock-tabs button {
  display: flex;
  align-items: center;
  gap: 4px;
  width: 107px;
  padding-left: 2px;
  white-space: nowrap;
}
.dock-tabs svg {
  width: 16px;
  height: 16px;
}
.dock-tabs .marks {
  width: 60px;
  padding-left: 1px;
  border-left: 1px solid #888;
}
.dock-tabs .active {
  width: 62px;
  gap: 2px;
  padding-left: 1px;
  border: 1px solid #888;
  border-width: 0 1px;
  color: #000;
  background: #fff;
}

/* status and taskbar */
.status {
  height: 15px;
  flex-shrink: 0;
  display: flex;
  overflow: hidden;
  border-top: 1px solid #eee;
  font-size: 11px;
}
.status span {
  height: 20px;
  padding: 2px 8px 0 4px;
  border-right: 1px solid #eee;
  white-space: nowrap;
}
.taskbar {
  height: 16px;
  flex-shrink: 0;
  display: flex;
  align-items: flex-start;
  overflow: hidden;
  border-top: 1px solid #0a0e12;
  background: linear-gradient(90deg, #27333e, #2c3b48 50%, #1d2730);
  color: #fff;
}
.taskbar button {
  width: 58px;
  height: 15px;
  margin-right: 4px;
  display: flex;
  justify-content: center;
  overflow: hidden;
}
.taskbar button svg {
  width: 36px;
  height: 15px;
}
.taskbar .start {
  width: 54px;
}
.taskbar .lit {
  border: 1px solid #b8c0c8;
  border-bottom: 0;
  border-radius: 3px 3px 0 0;
  background: linear-gradient(90deg, #7d8790, #a8b0b6 50%, #77818a);
}
.tray {
  margin: 7px 52px 0 auto;
}
.clock {
  margin: 3px 19px 0 0;
}
.desk {
  width: 14px;
  height: 15px;
  border: 1px solid #7e8890;
  background: linear-gradient(#66717a, #252d34);
}
```
